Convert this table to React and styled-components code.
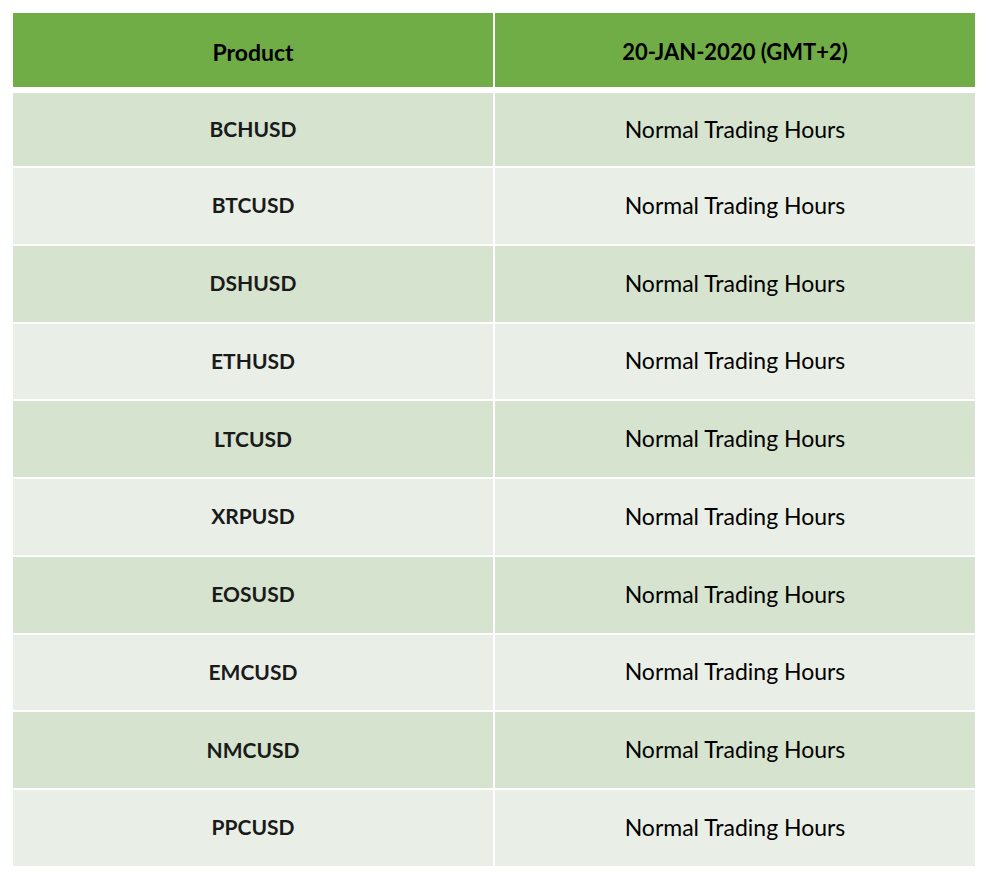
import React from "react";
import styled, { createGlobalStyle } from "styled-components";

const Global = createGlobalStyle`
  html, body { margin: 0; padding: 0; background: #ffffff; }
  body { font-family: Lato, "Open Sans", sans-serif; }
`;

const Page = styled.div`
  padding: 13px 0 0 13px;
`;

const Table = styled.div`
  width: 962px;
  display: flex;
  flex-direction: column;
`;

const Row = styled.div`
  display: grid;
  grid-template-columns: 480px 480px;
  column-gap: 2px;
  height: ${(p) => p.$h}px;
  margin-top: ${(p) => p.$gap}px;
`;

const Cell = styled.div`
  display: flex;
  align-items: center;
  justify-content: center;
  background: ${(p) => p.$bg};
  font-size: ${(p) => p.$size}px;
  font-weight: ${(p) => (p.$bold ? 700 : 400)};
  color: ${(p) => p.$color || "#000"};
  padding-top: ${(p) => p.$pt || 0}px;
  padding-bottom: ${(p) => p.$pb || 0}px;
  box-sizing: border-box;
`;

const products = [
  "BCHUSD",
  "BTCUSD",
  "DSHUSD",
  "ETHUSD",
  "LTCUSD",
  "XRPUSD",
  "EOSUSD",
  "EMCUSD",
  "NMCUSD",
  "PPCUSD",
];

export default function App() {
  return (
    <>
      <Global />
      <Page>
        <Table>
          <Row $h={74} $gap={0}>
            <Cell $bg="#70AD47" $bold $size={23} $pt={3}>Product</Cell>
            <Cell $bg="#70AD47" $bold $size={22} $pt={3}>20-JAN-2020 (GMT+2)</Cell>
          </Row>
          {products.map((p, i) => {
            const bg = i % 2 === 0 ? "#D5E3CF" : "#E9EFE7";
            return (
              <Row key={p} $h={i === 0 ? 73 : 75.75} $gap={i === 0 ? 6 : 2}>
                <Cell $bg={bg} $bold $size={21} $pb={2} $color="#1a1a1a">{p}</Cell>
                <Cell $bg={bg} $size={23} $pb={2}>Normal Trading Hours</Cell>
              </Row>
            );
          })}
        </Table>
      </Page>
    </>
  );
}
